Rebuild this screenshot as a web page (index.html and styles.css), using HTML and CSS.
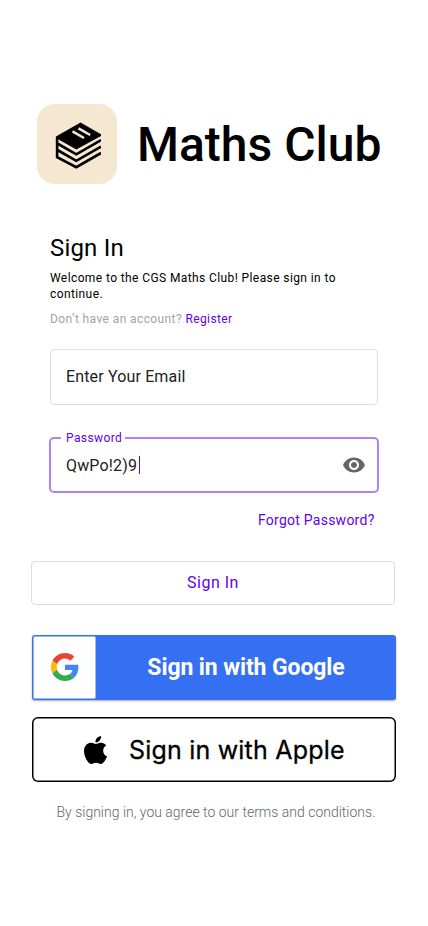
FILE: index.html
```html
<!DOCTYPE html>
<html lang="en">
<head>
<meta charset="utf-8">
<meta name="viewport" content="width=device-width, initial-scale=1">
<title>Maths Club</title>
<link rel="stylesheet" href="styles.css">
</head>
<body>
<main class="screen">
  <header class="brand">
    <svg class="logo" viewBox="0 0 80 80" aria-hidden="true">
      <path d="M43.500 18.500 64 30.300V32L39.300 45.500 19 34V32.500z"/>
      <path class="logo-edge" d="M20.100 33v20.200L39.300 63.200 64 49M19.500 39 39.300 50.300 64 36.200M19.500 45.500 39.300 56.800 64 42.600"/>
      <path class="logo-cut" d="M64 20h8v45h-8z"/>
      <path class="logo-mark" d="m35.500 27.300 11.500 6.700M41.500 24.300 53.200 31"/>
    </svg>
    <h1 class="title">Maths Club</h1>
  </header>

  <form class="form">
    <section class="intro">
      <h2 class="heading">Sign In</h2>
      <p class="welcome">Welcome to the CGS Maths Club! Please sign in to<br>continue.</p>
      <p class="register">Don’t have an account? <a class="link">Register</a></p>
    </section>
    <div class="field">Enter Your Email</div>
    <div class="field field-active">
      <span class="label">Password</span>
      <span class="value">QwPo!2)9</span><span class="caret"></span>
      <svg class="eye" viewBox="0 0 24 24" aria-hidden="true"><path d="M12 4.500C7 4.500 2.730 7.610 1 12c1.730 4.390 6 7.500 11 7.500s9.270-3.110 11-7.500c-1.730-4.390-6-7.500-11-7.500zM12 17c-2.760 0-5-2.240-5-5s2.240-5 5-5 5 2.240 5 5-2.240 5-5 5zm0-8c-1.660 0-3 1.340-3 3s1.340 3 3 3 3-1.340 3-3-1.340-3-3-3z"/></svg>
    </div>
    <a class="link forgot">Forgot Password?</a>
  </form>

  <div class="actions">
    <button class="submit">Sign In</button>
    <button class="google">
      <span class="google-tile">
        <svg class="google-logo" viewBox="0 0 48 48" aria-hidden="true">
          <path fill="#EA4335" d="M24 9.500c3.540 0 6.710 1.220 9.210 3.600l6.850-6.850C35.900 2.380 30.470 0 24 0 14.620 0 6.510 5.380 2.560 13.220l7.980 6.190C12.430 13.720 17.740 9.500 24 9.500z"/>
          <path fill="#4285F4" d="M46.980 24.550c0-1.570-.15-3.090-.38-4.550H24v9.020h12.940c-.58 2.960-2.260 5.480-4.780 7.180l7.730 6c4.510-4.180 7.090-10.360 7.090-17.650z"/>
          <path fill="#FBBC05" d="M10.530 28.590c-.48-1.450-.76-2.990-.76-4.590s.27-3.140.76-4.590l-7.980-6.190C.92 16.460 0 20.120 0 24s.92 7.540 2.560 10.780z"/>
          <path fill="#34A853" d="M24 48c6.480 0 11.930-2.130 15.890-5.810l-7.730-6c-2.150 1.450-4.920 2.300-8.160 2.300-6.260 0-11.570-4.220-13.470-9.910l-7.980 6.190C6.510 42.620 14.620 48 24 48z"/>
        </svg>
      </span>
      <span class="google-text">Sign in with Google</span>
    </button>
    <button class="apple">
      <svg class="apple-logo" viewBox="2.200 0 19.600 24" preserveAspectRatio="none" aria-hidden="true"><path d="M12.152 6.896c-.948 0-2.415-1.078-3.960-1.040-2.040.027-3.910 1.183-4.961 3.014-2.117 3.675-.546 9.103 1.519 12.090 1.013 1.454 2.208 3.090 3.792 3.039 1.520-.065 2.090-.987 3.935-.987 1.831 0 2.350.987 3.960.948 1.637-.026 2.676-1.480 3.676-2.948 1.156-1.688 1.636-3.325 1.662-3.415-.039-.013-3.182-1.221-3.220-4.857-.026-3.040 2.480-4.494 2.597-4.559-1.429-2.090-3.623-2.324-4.390-2.376-2-.156-3.675 1.090-4.610 1.090zM15.530 3.830c.843-1.012 1.400-2.427 1.245-3.830-1.207.052-2.662.805-3.532 1.818-.78.896-1.454 2.338-1.273 3.714 1.338.104 2.715-.688 3.559-1.701"/></svg>
      <span class="apple-text">Sign in with Apple</span>
    </button>
  </div>
  <p class="terms">By signing in, you agree to our terms and conditions.</p>
</main>
</body>
</html>
```
FILE: styles.css
```css
* { box-sizing: border-box; }
body { margin: 0; background: #fff; color: #000; font-family: Roboto, sans-serif; }
h1, h2, p { margin: 0; font-weight: 400; }
button { font-family: inherit; margin: 0; padding: 0; }

.screen { width: 428px; height: 926px; padding-top: 104px; overflow: hidden; }
.brand { display: flex; align-items: center; gap: 20px; padding-left: 37px; height: 80px; }
.logo { width: 80px; height: 80px; border-radius: 18px; background: #f6e7d3; flex: none; }
.logo-edge { fill: none; stroke: #000; stroke-width: 2.6; }
.logo-mark { fill: none; stroke: #f6e7d3; stroke-width: 2.5; }
.logo-cut { fill: #f6e7d3; }
.title { padding-top: 2px; font-size: 48px; font-weight: 500; line-height: 56px; white-space: nowrap; }

.form { display: flex; flex-direction: column; margin: 50px 50px 0; }
.intro { height: 115px; white-space: nowrap; }
.heading { font-size: 24px; line-height: 28px; letter-spacing: 0.18px; }
.welcome { margin-top: 8px; font-size: 12px; line-height: 16px; letter-spacing: 0.4px; }
.register { margin-top: 9px; font-size: 12px; line-height: 16px; letter-spacing: 0.4px; color: #a3a3a3; }
.link { color: #6200ee; }

.field { position: relative; display: flex; align-items: center; height: 56px; padding: 0 15px 2px; border: 1px solid #dedede; border-radius: 4px; font-size: 16px; letter-spacing: 0.15px; color: #212121; }
.field-active { margin: 32px -1px 0; padding: 0 11px 0 15px; border: 2px solid #b080f6; border-radius: 5px; }
.label { position: absolute; left: 10px; top: -9px; padding: 0 3px 0 5px; background: #fff; color: #6200ee; font-size: 12px; line-height: 16px; letter-spacing: 0.4px; }
.caret { width: 1px; height: 18px; margin-left: 2px; background: #6200ee; }
.eye { width: 24px; height: 24px; margin-left: auto; fill: #666; }
.forgot { align-self: flex-end; margin: 19px 3.5px 0 0; font-size: 14px; line-height: 16px; letter-spacing: 0.25px; }

.actions { display: flex; flex-direction: column; margin: 33px 32px 0; }
.submit { height: 44px; margin: 0 1px 0 -1px; padding-bottom: 2px; border: 1px solid #dedede; border-radius: 4px; background: #fff; color: #6200ee; font-size: 16px; letter-spacing: 0.5px; }
.google { display: flex; height: 65px; margin-top: 30px; padding: 1px; border: 0; border-radius: 3px; background: #3570f2; color: #fff; box-shadow: 0 1px 2px rgba(0,0,0,.35); }
.google-tile { display: flex; align-items: center; justify-content: center; width: 63px; height: 63px; padding-bottom: 1px; background: #fff; border: 1px solid #9ab7f8; border-radius: 2px; }
.google-logo { width: 28px; height: 28px; }
.google-text { flex: 1; align-self: center; padding-left: 1px; font-size: 23px; font-weight: 700; line-height: 28px; letter-spacing: -0.11px; white-space: nowrap; }
.apple { display: flex; align-items: center; height: 65px; margin-top: 17px; padding-left: 52px; border: 0; box-shadow: inset 0 0 0 1.5px #000; border-radius: 6px; background: #fff; color: #000; }
.apple-logo { width: 23px; height: 28px; }
.apple-text { margin-left: 22px; font-family: Inter, sans-serif; font-size: 25px; line-height: 30px; letter-spacing: 0.2px; -webkit-text-stroke: 0.3px #000; white-space: nowrap; }
.terms { margin-top: 22px; padding-left: 4px; text-align: center; font-size: 14px; font-weight: 300; line-height: 17px; color: #666; white-space: nowrap; }
```
